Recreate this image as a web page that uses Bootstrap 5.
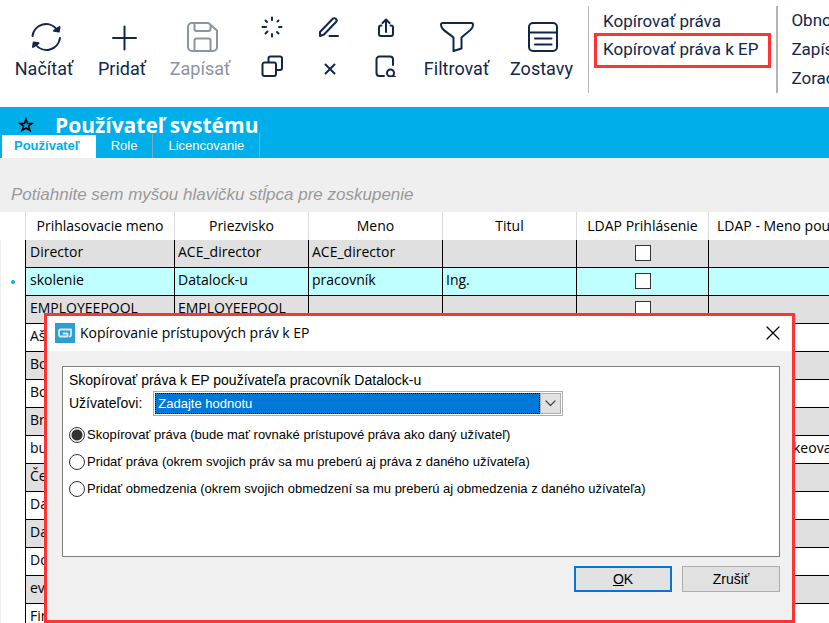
<!DOCTYPE html>
<html lang="sk">
<head>
<meta charset="utf-8">
<meta name="viewport" content="width=device-width, initial-scale=1">
<title>Používateľ systému</title>
<link rel="stylesheet" href="https://cdn.jsdelivr.net/npm/bootstrap@5.3.0/dist/css/bootstrap.min.css">
<style>
:root { --navy:#10274a; --sky:#00aeea; --alert:#ff3333; --face:#f0f0f0; }
body { font-family:"Open Sans","Noto Sans",sans-serif; font-size:14px; line-height:20px; color:#000; background:#fff; height:100vh; }
svg { display:block; fill:none; stroke:currentColor; stroke-width:2; stroke-linecap:round; stroke-linejoin:round; }
svg.thin { stroke-width:1.2; }
button { border:0; background:none; padding:0; color:inherit; }

.toolbar { height:107px; font-family:Roboto,sans-serif; font-size:18px; line-height:24px; color:var(--navy); padding-left:5px; }
.tool { width:78px; height:107px; padding-top:20px; line-height:24px; }
.tool svg { margin:0 0 3px 3px; }
.tool-wide { width:85px; }
.tool-wide svg { margin-left:0; }
.tool:disabled { color:#8a94a5; }
.mini-tools { display:grid; grid-template-columns:repeat(3,57px); grid-auto-rows:39px; margin-top:7px; margin-left:4px; height:78px; }
.mini-tools button { display:grid; place-items:center; }
.links { height:87px; margin-top:6px; padding-top:1px; border-left:1px solid #b4b4b4; font-size:17px; }
.links.more { border-left-width:2px; padding:0 0 0 13px; }
.links a { display:block; color:inherit; text-decoration:none; line-height:29px; }
.links.first a { border:3px solid transparent; padding:0 10px 0 6px; margin:0 5px; line-height:22px; height:28px; }
.links.first a.marked { border-color:var(--alert); height:35px; line-height:27px; margin-top:-2px; }

.titlebar { background:var(--sky); color:#fff; height:51px; }
.titlebar h1 { font-size:21px; line-height:37px; font-weight:700; height:26px; }
.star { margin:10px 21px 0 18px; color:#000; }
.tabs { font-family:"Liberation Sans",sans-serif; font-size:13px; line-height:20px; }
.tabs .nav-link { color:#fff; padding:3px 15px 2px; border-right:1px solid #7fa9bd; border-radius:0; }
.tabs .nav-link.active { color:var(--sky); background:#fff; font-weight:700; padding:1px 16px 2px 12px; margin:2px 0 0 2px; border:0; }

.groupbar { height:54px; background:#efefef; color:#999; font:italic 17px/22px "Liberation Sans",sans-serif; padding:26px 0 0 11px; }

.grid-table { table-layout:fixed; width:calc(100% + 50px); border-collapse:separate; border-spacing:0; }
.grid-table th { height:28px; padding:0; font-weight:400; text-align:center; border-right:1px solid #dcdcdc; white-space:nowrap; }
.grid-table td { height:28px; padding:0 3px 4px; border-right:1px solid #000; border-bottom:1px solid #000; white-space:nowrap; background:#fff; }
.grid-table td:nth-child(2) { padding-left:4px; }
.grid-table tbody tr:nth-child(odd) td { background:#e0e0e0; }
.grid-table tbody tr.current td { background:#c0ffff; }
.grid-table tbody tr td.gutter { background:#fff; border-bottom:0; border-left:1px solid #efefef; padding:0; }
.dot { display:block; width:4px; height:4px; margin:0 auto; border-radius:2px; background:var(--sky); }
.grid-table input { appearance:none; display:block; width:16px; height:16px; margin:2px auto 0; border:1px solid #333; background:#fff; }
td.tail { padding-left:84px !important; }

.dialog-window { position:absolute; top:101px; left:44px; right:34px; border:3px solid var(--alert); background:var(--face); font-family:"Liberation Sans",sans-serif; font-size:14px; }
.dialog-head { height:35px; background:#fff; padding:0 12px 2px 8px; font-family:"Open Sans","Noto Sans",sans-serif; }
.dialog-head h2 { font-size:14px; line-height:20px; font-weight:400; padding-left:5px; }
.dialog-body { padding:15px 12px 28px 15px; }
.panel { border:1px solid #7f7f7f; background:#fff; margin:0; height:191px; padding:3px 6px; }
.combo { width:410px; height:25px; border:1px solid #adadad; padding:1px; margin:1px 0 0 11px; }
.combo select { appearance:none; border:1px dotted #000; border-radius:0; background:#0078d7; color:#fff; padding:0 2px; font-size:13px; line-height:18px; outline:0; }
.combo span { width:21px; border:1px solid #adadad; background:#e1e1e1; color:#444; pointer-events:none; }
.choices { margin-top:5px; }
.choice { height:27px; font-size:13px; }
.choice input { appearance:none; flex:none; width:16px; height:16px; margin:0 2px 0 0; border:1px solid #333; border-radius:50%; background:#fff; }
.choice input:checked { background:radial-gradient(circle,#333 0 5px,#fff 6px); }
.actions { margin-top:9px; gap:10px; }
.push { width:98px; height:26px; border:1px solid #adadad; background:#e1e1e1; }
.push.main { border:2px solid #0078d7; }
</style>
<script src="https://cdn.jsdelivr.net/npm/bootstrap@5.3.0/dist/js/bootstrap.bundle.min.js"></script>
</head>
<body class="overflow-hidden d-flex flex-column">

<header class="toolbar d-flex flex-nowrap align-items-start text-nowrap overflow-hidden flex-shrink-0">
  <button class="tool flex-shrink-0 d-flex flex-column align-items-center" type="button">
    <svg width="34" height="34" viewBox="0 0 34 34"><path d="M3.500 16A13.700 13.700 0 0 1 28 9.500M31 18A13.700 13.700 0 0 1 6.500 24.500"/><path fill="currentColor" d="M30.500 7 29.800 11.500 25 10.800ZM4 27 4.700 22.500 9.500 23.200Z"/></svg>Načítať
  </button>
  <button class="tool flex-shrink-0 d-flex flex-column align-items-center" type="button">
    <svg width="34" height="34" viewBox="0 0 34 34"><path d="M6 18H29M17.500 6.500V29.500"/></svg>Pridať
  </button>
  <button class="tool flex-shrink-0 d-flex flex-column align-items-center" type="button" disabled>
    <svg width="34" height="34" viewBox="0 0 34 34"><path d="M7 3H23.500L32 10.500V27a4 4 0 0 1-4 4H7a4 4 0 0 1-4-4V7a4 4 0 0 1 4-4ZM9.500 3V9a2 2 0 0 0 2 2H23.500a2 2 0 0 0 2-2V5M9.500 31V20.500a2 2 0 0 1 2-2H23.500a2 2 0 0 1 2 2V31"/></svg>Zapísať
  </button>
  <div class="mini-tools flex-shrink-0">
    <button type="button" aria-label="Obnoviť"><svg width="22" height="22" viewBox="0 0 22 22"><path d="M11 1.500V4M11 18V20.500M1.500 11H5M18 11H20.500M4.500 4.500 6 6M16 16 17.500 17.500M4.500 17.500 6.500 15.500M16.500 5.500 17.500 4.500"/></svg></button>
    <button type="button" aria-label="Upraviť"><svg width="22" height="22" viewBox="0 0 22 22"><path d="M2 20V16L14.500 3a2.300 2.300 0 0 1 3.500 3L6 18.500 2 20M11.500 20H20"/></svg></button>
    <button type="button" aria-label="Export"><svg width="22" height="22" viewBox="0 0 22 22"><path d="M6.500 9.500H6a2 2 0 0 0-2 2V18a2 2 0 0 0 2 2H16a2 2 0 0 0 2-2V11.500a2 2 0 0 0-2-2H15.500M11 16V4M7.500 7 11 3.500 14.500 7"/></svg></button>
    <button type="button" aria-label="Kopírovať"><svg width="22" height="22" viewBox="0 0 22 22"><path d="M7.500 7V3.500a2 2 0 0 1 2-2H19a2 2 0 0 1 2 2V13a2 2 0 0 1-2 2H15.500M3.500 7.500H13a2 2 0 0 1 2 2V19a2 2 0 0 1-2 2H3.500a2 2 0 0 1-2-2V9.500a2 2 0 0 1 2-2Z"/></svg></button>
    <button type="button" aria-label="Zmazať"><svg width="22" height="22" viewBox="0 0 22 22"><path d="M7.500 9.500 16.500 18.500M16.500 9.500 7.500 18.500"/></svg></button>
    <button type="button" aria-label="Náhľad"><svg width="22" height="22" viewBox="0 0 22 22"><path d="M9 21H4.500a3 3 0 0 1-3-3V4.500a3 3 0 0 1 3-3H15a3 3 0 0 1 3 3V10M18.500 21 20 22"/><circle cx="15.500" cy="18" r="3.500"/></svg></button>
  </div>
  <button class="tool tool-wide flex-shrink-0 d-flex flex-column align-items-center" type="button">
    <svg width="34" height="34" viewBox="0 0 34 34"><path d="M2.500 3H31.500A1.500 1.500 0 0 1 33 4.500C33 9 30 10 21.500 17.500V28.500L13.500 31V17.500C4 10 1 9 1 4.500A1.500 1.500 0 0 1 2.500 3Z"/></svg>Filtrovať
  </button>
  <button class="tool tool-wide flex-shrink-0 d-flex flex-column align-items-center" type="button">
    <svg width="34" height="34" viewBox="0 0 34 34"><path d="M8 3H28a4 4 0 0 1 4 4V27a4 4 0 0 1-4 4H8a4 4 0 0 1-4-4V7a4 4 0 0 1 4-4ZM4 12.500H32M10 18.500H26.500M10 24.500H26.500"/></svg>Zostavy
  </button>
  <nav class="links first flex-shrink-0 ms-1">
    <a href="#">Kopírovať práva</a>
    <a href="#" class="marked">Kopírovať práva k EP</a>
  </nav>
  <nav class="links more flex-shrink-0">
    <a href="#">Obnoviť</a>
    <a href="#">Zapísať</a>
    <a href="#">Zoradiť</a>
  </nav>
</header>

<div class="titlebar flex-shrink-0">
  <div class="d-flex">
    <svg class="star" width="16" height="16" viewBox="0 0 16 16"><path stroke-linejoin="miter" stroke-width="1.600" d="M8 2 9.500 6.500H14L10.500 9 12 13.500 8 11 4 13.500 5.500 9 2 6.500H6.500Z"/></svg>
    <h1 class="m-0 overflow-hidden">Používateľ systému</h1>
  </div>
  <nav class="tabs nav flex-nowrap">
    <a class="nav-link active" href="#">Používateľ</a>
    <a class="nav-link" href="#">Role</a>
    <a class="nav-link" href="#">Licencovanie</a>
  </nav>
</div>

<div class="groupbar flex-shrink-0">Potiahnite sem myšou hlavičku stĺpca pre zoskupenie</div>

<main class="position-relative flex-grow-1 overflow-hidden">
  <table class="grid-table">
    <colgroup><col style="width:26px"><col style="width:149px"><col style="width:134px"><col style="width:134px"><col style="width:134px"><col style="width:132px"><col></colgroup>
    <thead><tr><th></th><th>Prihlasovacie meno</th><th>Priezvisko</th><th>Meno</th><th>Titul</th><th>LDAP Prihlásenie</th><th class="text-start ps-2">LDAP - Meno používateľa</th></tr></thead>
    <tbody>
      <tr><td class="gutter"></td><td>Director</td><td>ACE_director</td><td>ACE_director</td><td></td><td><input type="checkbox" aria-label="LDAP Director"></td><td></td></tr>
      <tr class="current"><td class="gutter"><span class="dot"></span></td><td>skolenie</td><td>Datalock-u</td><td>pracovník</td><td>Ing.</td><td><input type="checkbox" aria-label="LDAP skolenie"></td><td></td></tr>
      <tr><td class="gutter"></td><td>EMPLOYEEPOOL</td><td>EMPLOYEEPOOL</td><td></td><td></td><td><input type="checkbox" aria-label="LDAP EMPLOYEEPOOL"></td><td></td></tr>
      <tr><td class="gutter"></td><td>Aš</td><td></td><td></td><td></td><td></td><td></td></tr>
      <tr><td class="gutter"></td><td>Bo</td><td></td><td></td><td></td><td></td><td></td></tr>
      <tr><td class="gutter"></td><td>Bo</td><td></td><td></td><td></td><td></td><td></td></tr>
      <tr><td class="gutter"></td><td>Br</td><td></td><td></td><td></td><td></td><td></td></tr>
      <tr><td class="gutter"></td><td>bu</td><td></td><td></td><td></td><td></td><td class="tail">keova</td></tr>
      <tr><td class="gutter"></td><td>Če</td><td></td><td></td><td></td><td></td><td></td></tr>
      <tr><td class="gutter"></td><td>Da</td><td></td><td></td><td></td><td></td><td></td></tr>
      <tr><td class="gutter"></td><td>Da</td><td></td><td></td><td></td><td></td><td></td></tr>
      <tr><td class="gutter"></td><td>Do</td><td></td><td></td><td></td><td></td><td></td></tr>
      <tr><td class="gutter"></td><td>ev</td><td></td><td></td><td></td><td></td><td></td></tr>
      <tr><td class="gutter"></td><td>Fir</td><td></td><td></td><td></td><td></td><td></td></tr>
    </tbody>
  </table>

  <section class="dialog-window" role="dialog" aria-labelledby="dlg-title">
    <div class="dialog-head d-flex align-items-center">
      <svg width="20" height="20" viewBox="0 0 20 20"><path fill="#2b9fd2" stroke="none" d="M0 0H20V20H0Z"/><path stroke="#d5edf8" stroke-width="1.800" d="M12 13.500H5.500a1.500 1.500 0 0 1-1.500-1.500V8a1.500 1.500 0 0 1 1.500-1.500H16V12a1.500 1.500 0 0 1-1.500 1.500M8.500 10.500H12.500V13"/></svg>
      <h2 class="m-0 flex-grow-1" id="dlg-title">Kopírovanie prístupových práv k EP</h2>
      <button type="button" aria-label="Zavrieť"><svg class="thin" width="14" height="14" viewBox="0 0 14 14"><path d="M1 1 13 13M13 1 1 13"/></svg></button>
    </div>
    <form class="dialog-body">
      <fieldset class="panel">
        <div>Skopírovať práva k EP používateľa pracovník Datalock-u</div>
        <div class="d-flex align-items-center">
          <label for="target">Užívateľovi:</label>
          <div class="combo d-flex">
            <select id="target" class="flex-grow-1"><option>Zadajte hodnotu</option></select>
            <span class="d-grid align-content-center justify-content-center"><svg class="thin" width="11" height="7" viewBox="0 0 11 7"><path d="M1 1 5.500 5.500 10 1"/></svg></span>
          </div>
        </div>
        <div class="choices">
          <label class="choice d-flex align-items-center"><input type="radio" name="mode" checked>Skopírovať práva (bude mať rovnaké prístupové práva ako daný užívateľ)</label>
          <label class="choice d-flex align-items-center"><input type="radio" name="mode">Pridať práva (okrem svojich práv sa mu preberú aj práva z daného užívateľa)</label>
          <label class="choice d-flex align-items-center"><input type="radio" name="mode">Pridať obmedzenia (okrem svojich obmedzení sa mu preberú aj obmedzenia z daného užívateľa)</label>
        </div>
      </fieldset>
      <div class="actions d-flex justify-content-end">
        <button class="push main" type="button"><u>O</u>K</button>
        <button class="push" type="button">Zrušiť</button>
      </div>
    </form>
  </section>
</main>
</body>
</html>
